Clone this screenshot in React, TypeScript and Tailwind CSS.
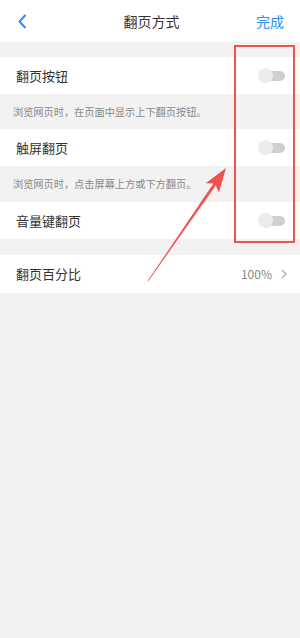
const font = { fontFamily: '"Noto Sans CJK SC", "Noto Sans", sans-serif' };

const Toggle = () => (
  <div className="relative w-[27px] h-[15px] mr-[15px]">
    <div className="absolute right-0 top-[3px] w-[20px] h-[10px] rounded-full bg-[#cfcfcf]" />
    <div className="absolute left-0 top-0 w-[15px] h-[15px] rounded-full bg-[#ececec]" />
  </div>
);

const SwitchRow = ({ label }: { label: string }) => (
  <div className="flex items-center justify-between bg-white h-[37px] pl-4">
    <span className="text-[13px] text-[#333]">{label}</span>
    <Toggle />
  </div>
);

const Desc = ({ text }: { text: string }) => (
  <div className="h-[35px] flex items-center pl-[13px] text-[10.2px] text-[#888]">{text}</div>
);

export default function App() {
  return (
    <div className="relative w-[300px] h-[638px] bg-[#f2f2f2] overflow-hidden" style={font}>
      {/* Header */}
      <div className="flex items-center justify-between h-[42px] bg-white px-4">
        <svg width="10" height="15" viewBox="0 0 10 15" className="ml-[1px]">
          <path d="M8 1.5 L2.5 7.5 L8 13.5" stroke="#2b8ff0" strokeWidth="2" fill="none" strokeLinecap="round" strokeLinejoin="round" />
        </svg>
        <span className="text-[14px] text-[#333] pl-[20px]">翻页方式</span>
        <span className="text-[14px] text-[#2b8ff0]">完成</span>
      </div>

      <div className="h-[15px]" />

      <SwitchRow label="翻页按钮" />
      <Desc text="浏览网页时，在页面中显示上下翻页按钮。" />
      <SwitchRow label="触屏翻页" />
      <Desc text="浏览网页时，点击屏幕上方或下方翻页。" />
      <div className="h-[1px]" />
      <SwitchRow label="音量键翻页" />

      <div className="h-[16px]" />

      <div className="flex items-center justify-between bg-white h-[38px] pl-4 pr-[13px]">
        <span className="text-[13px] text-[#333]">翻页百分比</span>
        <div className="flex items-center gap-[9px]">
          <span className="text-[12px] text-[#888]">100%</span>
          <svg width="6" height="10" viewBox="0 0 6 10">
            <path d="M1 1 L5 5 L1 9" stroke="#aaa" strokeWidth="1.2" fill="none" />
          </svg>
        </div>
      </div>

      {/* Annotation: red box */}
      <div className="absolute left-[234px] top-[45px] w-[61px] h-[198px] border-[2.5px] border-[#f2524f]" />

      {/* Annotation: arrow */}
      <svg className="absolute left-0 top-0" width="300" height="638">
        <polygon
          points="147.7,280.8 213.4,183.6 205.7,183.2 226,168 218.9,192.4 215.8,185.4 148.3,281.2"
          fill="#f2524f"
        />
      </svg>
    </div>
  );
}
